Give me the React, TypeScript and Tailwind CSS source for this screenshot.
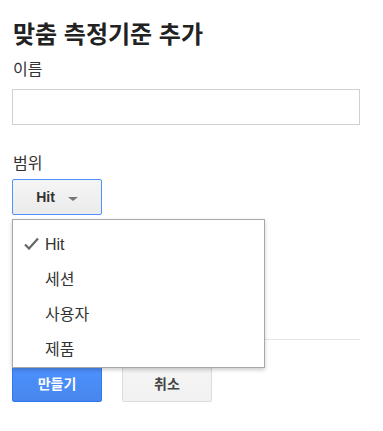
import { useState } from "react";

const items = ["Hit", "세션", "사용자", "제품"];

export default function App() {
  const [selected] = useState("Hit");

  return (
    <div
      className="w-[383px] h-[431px] bg-white text-[#333] px-[12px]"
      style={{ fontFamily: "'Liberation Sans', 'Noto Sans CJK KR', sans-serif" }}
    >
      <h1 className="pt-[20px] text-[24px] leading-[30px] font-bold text-[#222] pl-px">맞춤 측정기준 추가</h1>
      <div className="mt-[9px] text-[16px] leading-[22px] pl-px">이름</div>
      <input className="mt-[8px] block w-[348px] h-[36px] border border-[#d0d0d0] outline-none px-2" />

      <div className="mt-[28px] text-[16px] leading-[22px] pl-px">범위</div>
      <div className="relative mt-[4px]">
        <button className="flex items-center justify-center gap-[13px] w-[90px] h-[36px] rounded-[2px] border border-[#4d90fe] bg-gradient-to-b from-[#f5f5f5] to-[#ebebeb] text-[14px] font-bold text-[#333]">
          <span>Hit</span>
          <span className="w-0 h-0 border-l-[5px] border-r-[5px] border-t-[4px] border-l-transparent border-r-transparent border-t-[#777] mt-[3px]" />
        </button>

        <div className="mt-[124px] border-t border-[#e5e5e5] w-[348px]" />

        <div className="flex gap-[20px] mt-[27px]">
          <button className="w-[90px] h-[35px] rounded-[2px] border border-[#3079ed] bg-gradient-to-b from-[#4d90fe] to-[#4787ed] text-white text-[14px] font-bold">
            만들기
          </button>
          <button className="w-[90px] h-[35px] rounded-[2px] border border-[#dcdcdc] bg-gradient-to-b from-[#f5f5f5] to-[#f1f1f1] text-[#444] text-[14px] font-bold">
            취소
          </button>
        </div>

        <div className="absolute left-0 top-[40px] w-[253px] h-[149px] bg-white border border-[#a8a8a8] shadow-[0_2px_4px_rgba(0,0,0,0.2)] pt-[7px]">
          {items.map((it) => (
            <div key={it} className="relative h-[35px] flex items-center pl-[32px] text-[16px] text-[#333]">
              {it === selected && (
                <svg className="absolute left-[11px] top-[10px]" width="15" height="13" viewBox="0 0 15 13">
                  <path d="M1 7.5 L5 11.5 L14 1.5" fill="none" stroke="#666" strokeWidth="2.2" />
                </svg>
              )}
              {it}
            </div>
          ))}
        </div>
      </div>
    </div>
  );
}
